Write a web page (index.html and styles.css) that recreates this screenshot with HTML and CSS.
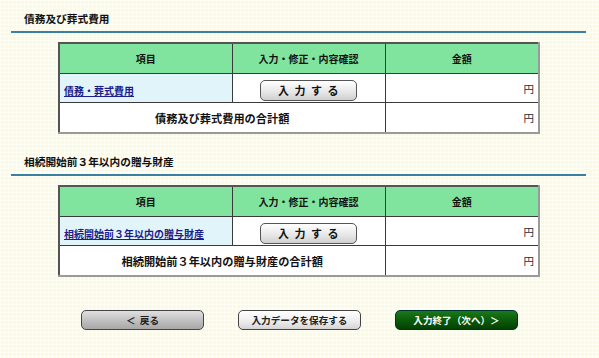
FILE: index.html
```html
<!DOCTYPE html>
<html lang="ja">
<head>
<meta charset="utf-8">
<title>債務及び葬式費用</title>
<link rel="stylesheet" href="styles.css">
</head>
<body>
<div class="page">
  <section class="section">
    <h2 class="title">債務及び葬式費用</h2>
    <table class="grid">
      <colgroup><col class="c1"><col class="c2"><col class="c3"></colgroup>
      <tr class="head"><th>項目</th><th>入力・修正・内容確認</th><th>金額</th></tr>
      <tr class="row">
        <td class="item"><a href="#">債務・葬式費用</a></td>
        <td class="act"><button class="btn-input" type="button">入力する</button></td>
        <td class="amt">円</td>
      </tr>
      <tr class="total">
        <td colspan="2" class="label">債務及び葬式費用の合計額</td>
        <td class="amt">円</td>
      </tr>
    </table>
  </section>
  <section class="section second">
    <h2 class="title">相続開始前３年以内の贈与財産</h2>
    <table class="grid">
      <colgroup><col class="c1"><col class="c2"><col class="c3"></colgroup>
      <tr class="head"><th>項目</th><th>入力・修正・内容確認</th><th>金額</th></tr>
      <tr class="row">
        <td class="item"><a href="#">相続開始前３年以内の贈与財産</a></td>
        <td class="act"><button class="btn-input" type="button">入力する</button></td>
        <td class="amt">円</td>
      </tr>
      <tr class="total">
        <td colspan="2" class="label">相続開始前３年以内の贈与財産の合計額</td>
        <td class="amt">円</td>
      </tr>
    </table>
  </section>
  <div class="actions">
    <button class="btn btn-back" type="button">＜&nbsp;&nbsp;戻る</button>
    <button class="btn btn-save" type="button">入力データを保存する</button>
    <button class="btn btn-next" type="button">入力終了（次へ）＞</button>
  </div>
</div>
</body>
</html>
```

FILE: styles.css
```css
html, body {
  margin: 0;
  padding: 0;
}
body {
  width: 599px;
  height: 358px;
  overflow: hidden;
  background-color: #fafae3;
  background-image:
    linear-gradient(#fefef4 1px, transparent 1px),
    linear-gradient(90deg, #fefef4 1px, transparent 1px);
  background-size: 4px 4px;
  font-family: "Noto Sans CJK JP", "Noto Sans", sans-serif;
  color: #111;
}
.page {
  padding: 11px 13px 0 11px;
}
.section.second {
  margin-top: 20px;
}
.title {
  margin: 0;
  padding: 0 0 4px 13px;
  font-size: 10.7px;
  line-height: 16px;
  font-weight: bold;
  border-bottom: 2px solid #3b7fa3;
}
.grid {
  margin: 9px 0 0 47px;
  width: 480px;
  border-collapse: collapse;
  table-layout: fixed;
  border-top: 2px solid #555;
  border-left: 2px solid #555;
  border-right: 2px solid #9a9a9a;
  border-bottom: 2px solid #9a9a9a;
}
.c1 { width: 173px; }
.c2 { width: 153px; }
.c3 { width: 154px; }
.grid th, .grid td {
  border: 1px solid #3a3a3a;
  padding: 0 4px;
}
.head th {
  background: #80e49e;
  height: 29px;
  font-size: 10px;
  font-weight: bold;
  text-align: center;
}
.row td {
  height: 28px;
  background: #fff;
}
.row td.item {
  background: #e1f4fa;
}
.item a {
  color: #1c1c8a;
  font-size: 10px;
  font-weight: bold;
  text-decoration: underline;
}
.act {
  text-align: center;
}
.btn-input {
  width: 97px;
  height: 21px;
  border: 1px solid #555;
  border-radius: 5px;
  background: linear-gradient(#ffffff, #e6e6e6 60%, #cfcfcf);
  font-family: inherit;
  font-size: 11px;
  font-weight: bold;
  letter-spacing: 5.5px;
  padding: 0 0 0 5px;
  color: #111;
  vertical-align: middle;
}
.amt {
  text-align: right;
  font-size: 10.5px;
  color: #2a2a3a;
  background: #fff;
}
.total td {
  height: 29px;
  background: #fff;
}
.total .label {
  text-align: center;
  font-size: 11.2px;
  font-weight: bold;
}
.actions {
  display: flex;
  justify-content: center;
  gap: 34px;
  margin-top: 33px;
  margin-left: -11px;
  margin-right: -13px;
}
.btn {
  width: 123px;
  height: 20px;
  border-radius: 5px;
  border: 1px solid #444;
  font-family: inherit;
  font-size: 9.6px;
  font-weight: bold;
  padding: 0;
  line-height: 18px;
}
.btn-back {
  background: linear-gradient(#e0e0e0, #bcbcbc 60%, #a8a8a8);
  color: #222;
}
.btn-save {
  background: linear-gradient(#ffffff, #ececec 60%, #d4d4d4);
  color: #222;
}
.btn-next {
  background: linear-gradient(#1a7a1a, #0b5c0b 50%, #034003);
  border-color: #033;
  color: #fff;
}
```
